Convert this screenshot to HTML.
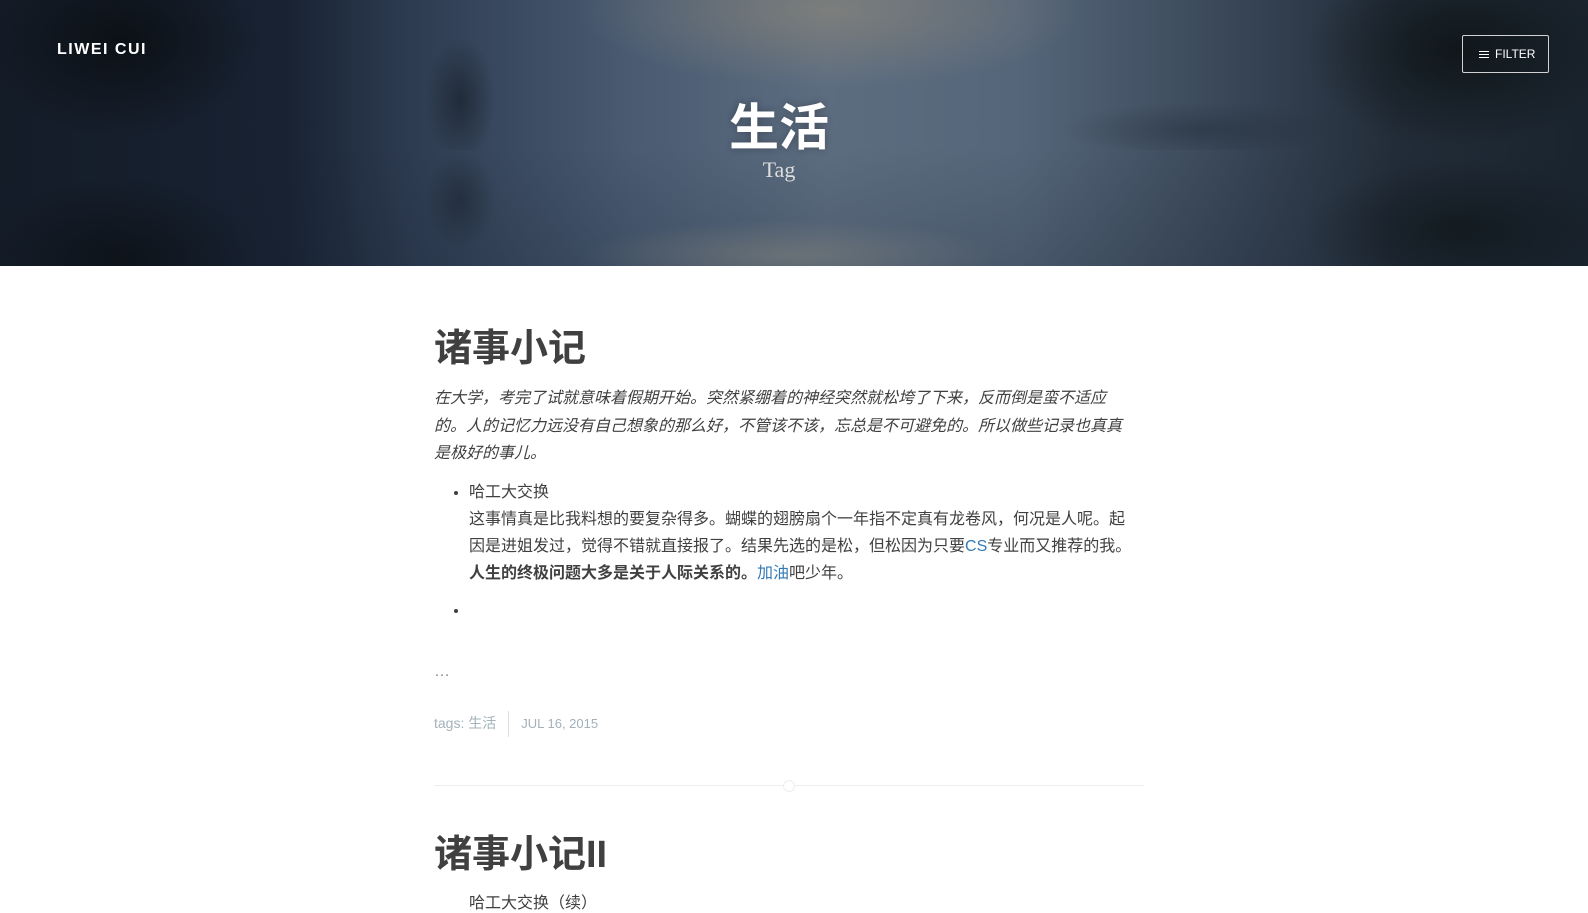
<!DOCTYPE html>
<html><head><meta charset="utf-8"><style>
*{margin:0;padding:0;box-sizing:border-box}
body{width:1588px;height:899px;overflow:hidden;background:#fff;font-family:"Liberation Sans","Noto Sans CJK SC",sans-serif;color:#404040}
.hero{position:relative;height:266px;overflow:hidden;background:
radial-gradient(ellipse 360px 110px at 830px 10px,rgba(150,140,120,.55),transparent 70%),
radial-gradient(ellipse 300px 50px at 790px 255px,rgba(140,140,130,.45),transparent 70%),
linear-gradient(180deg,rgba(0,0,0,0) 0,rgba(0,0,0,0) 55%,rgba(20,30,45,.2) 100%),
linear-gradient(90deg,#141c28 0,#182232 18%,#2e3c52 26%,#4a5b72 40%,#5d6d80 52%,#56667a 64%,#3c4a5c 76%,#222c38 88%,#1a242e 100%)}
.trees{position:absolute;left:0;right:0;top:0;height:150px;background:
radial-gradient(ellipse 200px 140px at 120px 40px,rgba(10,14,18,.85),transparent 70%),
radial-gradient(ellipse 50px 90px at 460px 100px,rgba(20,28,36,.6),transparent 70%),
radial-gradient(ellipse 220px 140px at 1460px 50px,rgba(12,18,20,.8),transparent 70%),
radial-gradient(ellipse 200px 40px at 1200px 130px,rgba(30,40,50,.4),transparent 70%)}
.refl{position:absolute;left:0;right:0;top:150px;height:116px;background:
radial-gradient(ellipse 200px 120px at 120px 110px,rgba(10,14,18,.7),transparent 70%),
radial-gradient(ellipse 50px 70px at 460px 50px,rgba(20,28,36,.45),transparent 70%),
radial-gradient(ellipse 220px 100px at 1460px 80px,rgba(12,18,20,.6),transparent 70%)}
.logo{position:absolute;left:57px;top:41px;color:#fff;font-weight:bold;font-size:16px;letter-spacing:1.5px}
.filter{position:absolute;left:1462px;top:35px;width:87px;height:38px;border:1px solid rgba(255,255,255,.8);border-radius:2px;color:#fff;font-size:12px;line-height:36px;padding-left:16px}
.filter span{display:inline-block;width:10px;height:7px;border-top:1.5px solid #fff;border-bottom:1.5px solid #fff;position:relative;margin-right:6px;vertical-align:0}
.filter span:after{content:"";position:absolute;left:0;right:0;top:1.5px;border-top:1.5px solid #fff}
.h1{position:absolute;left:429px;width:700px;top:88px;text-align:center;color:#fff;font-size:50px;font-weight:bold;text-shadow:0 0 8px rgba(0,0,0,.3)}
.tag{position:absolute;left:429px;width:700px;top:157px;text-align:center;color:#ddd;font-family:"Liberation Serif",serif;font-size:22px}
.main{position:absolute;left:434px;width:710px}
h2{font-size:38px;font-weight:bold;color:#404040;line-height:1}
.it{font-style:italic;font-size:16px;line-height:27.5px;width:690px}
ul{padding-left:35px;font-size:16px;line-height:27px;width:740px;white-space:nowrap}
a{color:#337ab7;text-decoration:none}
.meta{font-size:14px;color:#a3b1ba}
</style></head><body>
<div class="hero"><div class="trees"></div><div class="refl"></div>
<div class="logo">LIWEI CUI</div>
<div class="filter"><span></span>FILTER</div>
<div class="h1">生活</div>
<div class="tag">Tag</div>
</div>
<div class="main" style="top:330px"><h2>诸事小记</h2></div>
<div class="main it" style="top:385px">在大学，考完了试就意味着假期开始。突然紧绷着的神经突然就松垮了下来，反而倒是蛮不适应的。人的记忆力远没有自己想象的那么好，不管该不该，忘总是不可避免的。所以做些记录也真真是极好的事儿。</div>
<div class="main" style="top:479px"><ul>
<li>哈工大交换<br>这事情真是比我料想的要复杂得多。蝴蝶的翅膀扇个一年指不定真有龙卷风，何况是人呢。起<br>因是进姐发过，觉得不错就直接报了。结果先选的是松，但松因为只要<a>CS</a>专业而又推荐的我。<br><b>人生的终极问题大多是关于人际关系的。</b><a>加油</a>吧少年。</li>
<li style="margin-top:10px">&nbsp;</li></ul></div>
<div class="main meta" style="top:663px;font-size:16px;color:#888">…</div>
<div class="main meta" style="top:711px;height:26px;line-height:24px">tags: 生活<span style="display:inline-block;width:1px;height:26px;background:#ddd;vertical-align:middle;margin:0 12px"></span><span style="font-size:13px">JUL 16, 2015</span></div>
<div class="main" style="top:785px;height:1px;background:#eee"></div>
<div style="position:absolute;left:783px;top:780px;width:12px;height:12px;border:1px solid #eee;border-radius:50%;background:#fff"></div>
<div class="main" style="top:836px"><h2>诸事小记II</h2></div>
<div class="main" style="top:889px;padding-left:35px;font-size:16px">哈工大交换（续）</div>
</body></html>
